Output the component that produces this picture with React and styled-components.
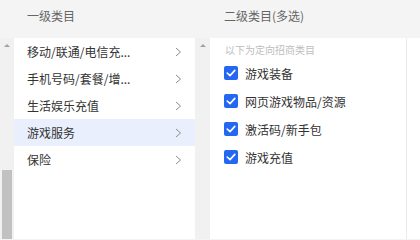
import React from "react";
import styled, { createGlobalStyle } from "styled-components";

const Global = createGlobalStyle`
  html, body { margin: 0; padding: 0; background: #f4f4f4; }
  body { font-family: "Noto Sans CJK SC", "Noto Sans", sans-serif; overflow: hidden; }
`;

const Page = styled.div`
  display: flex;
  width: 420px;
  height: 239px;
  background: #f4f4f4;
  overflow: hidden;
`;

const Column = styled.div`
  display: flex;
  flex-direction: column;
  width: ${(p) => p.$width}px;
  flex: none;
`;

const Header = styled.div`
  height: 30px;
  margin-bottom: 8px;
  display: flex;
  align-items: center;
  padding-left: ${(p) => p.$indent}px;
  font-size: 12px;
  color: #666;
`;

const Body = styled.div`
  flex: 1;
  display: flex;
  min-height: 0;
`;

const Scrollbar = styled.div`
  width: ${(p) => p.$width}px;
  flex: none;
  display: flex;
  flex-direction: column;
  background: #f1f1f1;
`;

const ArrowBtn = styled.div`
  height: 14px;
  display: flex;
  align-items: center;
  justify-content: center;
  &::before {
    content: "";
    border-left: 3px solid transparent;
    border-right: 3px solid transparent;
    border-bottom: 3px solid #a3a3a3;
    margin-left: ${(p) => p.$shift || 0}px;
  }
`;

const Track = styled.div`
  flex: 1;
  display: flex;
  flex-direction: column;
  padding: 0 2px;
`;

const Thumb = styled.div`
  margin-top: ${(p) => p.$top}px;
  flex: 1;
  background: #c1c1c1;
`;

const List = styled.div`
  flex: 1;
  background: #fff;
`;

const Row = styled.div`
  height: 27px;
  display: flex;
  align-items: center;
  justify-content: space-between;
  padding: 0 13px 0 13px;
  font-size: 12px;
  color: #333;
  background: ${(p) => (p.$active ? "#e9effc" : "transparent")};
`;

const Panel = styled.div`
  width: 196px;
  flex: none;
  background: #fff;
  padding: 5px 0 0 14px;
  box-sizing: border-box;
`;

const Hint = styled.div`
  font-size: 10px;
  line-height: 14px;
  color: #bdbdbd;
  margin: 0 0 2px 1px;
`;

const CheckRow = styled.label`
  height: 28px;
  display: flex;
  align-items: center;
  gap: 7px;
  font-size: 12px;
  color: #333;
`;

const Box = styled.span`
  width: 14px;
  height: 14px;
  border-radius: 2px;
  background: #2468f2;
  display: flex;
  align-items: center;
  justify-content: center;
  flex: none;
`;

const Rest = styled.div`
  flex: 1;
  display: flex;
  flex-direction: column;
`;

const RestBody = styled.div`
  flex: 1;
  background: #fff;
  border-left: 1px solid #ebebeb;
`;

const Chevron = () => (
  <svg width="7" height="10" viewBox="0 0 7 10">
    <polyline points="1,1 5.5,5 1,9" fill="none" stroke="#8c8c8c" strokeWidth="1" />
  </svg>
);

const Check = () => (
  <svg width="10" height="8" viewBox="0 0 10 8">
    <polyline points="1.2,4 4,6.6 8.8,1.4" fill="none" stroke="#fff" strokeWidth="1.6" strokeLinecap="round" strokeLinejoin="round" />
  </svg>
);

const first = ["移动/联通/电信充...", "手机号码/套餐/增...", "生活娱乐充值", "游戏服务", "保险"];
const second = ["游戏装备", "网页游戏物品/资源", "激活码/新手包", "游戏充值"];

export default function App() {
  return (
    <Page>
      <Global />
      <Column $width={195}>
        <Header $indent={27}>一级类目</Header>
        <Body>
          <Scrollbar $width={14}>
            <ArrowBtn />
            <Track>
              <Thumb $top={118} />
            </Track>
          </Scrollbar>
          <List>
            {first.map((t, i) => (
              <Row key={t} $active={i === 3}>
                <span>{t}</span>
                <Chevron />
              </Row>
            ))}
          </List>
        </Body>
      </Column>
      <Column $width={211}>
        <Header $indent={29}>二级类目(多选)</Header>
        <Body>
          <Scrollbar $width={15}>
            <ArrowBtn />
          </Scrollbar>
          <Panel>
            <Hint>以下为定向招商类目</Hint>
            {second.map((t) => (
              <CheckRow key={t}>
                <Box>
                  <Check />
                </Box>
                <span>{t}</span>
              </CheckRow>
            ))}
          </Panel>
        </Body>
      </Column>
      <Rest>
        <Header $indent={0} />
        <RestBody />
      </Rest>
    </Page>
  );
}
